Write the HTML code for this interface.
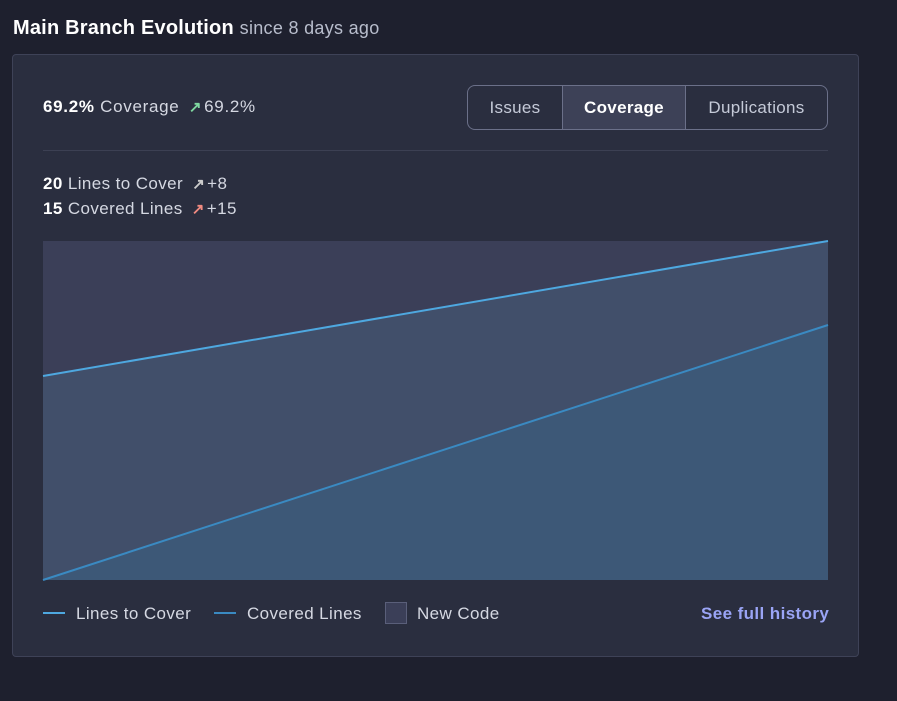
<!DOCTYPE html>
<html><head><style>
body{margin:0;width:897px;height:701px;background:#1e202e;font-family:"Liberation Sans",sans-serif;color:#d5d8e2;position:relative;overflow:hidden}
.t{position:absolute;left:13px;top:17px;font-size:20px;color:#fff;font-weight:bold;letter-spacing:0.2px}
.t span{font-weight:normal;color:#b8bdcc;font-size:18px;letter-spacing:0.3px}
.card{position:absolute;left:12px;top:54px;width:845px;height:601px;background:#2a2e3f;border:1px solid #3e4257;border-radius:4px}
.a{position:absolute;font-size:17px;letter-spacing:0.4px;white-space:nowrap}
b{color:#fff}
.ar{font-size:15px;font-weight:bold;margin:0 2px 0 4px}
.tabs{position:absolute;left:467px;top:85px;width:359px;height:43px;border:1px solid #6b7089;border-radius:8px;display:flex;overflow:hidden}
.tabs div{display:flex;align-items:center;justify-content:center;font-size:17px;letter-spacing:0.3px;color:#c5cad8}
.hr{position:absolute;left:43px;top:150px;width:785px;height:1px;background:#3c4053}
</style></head><body>
<div class="t">Main Branch Evolution <span>since 8 days ago</span></div>
<div class="card"></div>
<div class="a" style="left:43px;top:97px;letter-spacing:0.7px"><b>69.2%</b> Coverage <span class="ar" style="color:#7fd8a0">↗</span>69.2%</div>
<div class="tabs"><div style="width:94px">Issues</div><div style="width:122px;background:#3d4157;border-left:1px solid #6b7089;border-right:1px solid #6b7089;color:#fff;font-weight:bold">Coverage</div><div style="flex:1">Duplications</div></div>
<div class="hr"></div>
<div class="a" style="left:43px;top:174px"><b>20</b> Lines to Cover <span class="ar" style="color:#ccc">↗</span>+8</div>
<div class="a" style="left:43px;top:199px"><b>15</b> Covered Lines <span class="ar" style="color:#f08a80">↗</span>+15</div>
<svg style="position:absolute;left:0;top:0" width="897" height="701">
<rect x="43" y="241" width="785" height="339" fill="#3b3f58"/>
<polygon points="43,376 828,241 828,580 43,580" fill="#414f6a"/>
<polygon points="43,580 828,325 828,580" fill="#3d5877"/>
<line x1="43" y1="376" x2="828" y2="241" stroke="#4ea8e0" stroke-width="2"/>
<line x1="43" y1="580" x2="828" y2="325" stroke="#3a8ac2" stroke-width="2"/>
<line x1="43" y1="613" x2="65" y2="613" stroke="#4ea8e0" stroke-width="2"/>
<line x1="214" y1="613" x2="236" y2="613" stroke="#3a8ac2" stroke-width="2"/>
<rect x="385.5" y="602.5" width="21" height="21" fill="#3b3f58" stroke="#5a5f7a"/>
</svg>
<div class="a" style="left:76px;top:604px">Lines to Cover</div>
<div class="a" style="left:247px;top:604px">Covered Lines</div>
<div class="a" style="left:417px;top:604px">New Code</div>
<div class="a" style="left:701px;top:604px;color:#9aa4f5;font-weight:bold">See full history</div>
</body></html>
